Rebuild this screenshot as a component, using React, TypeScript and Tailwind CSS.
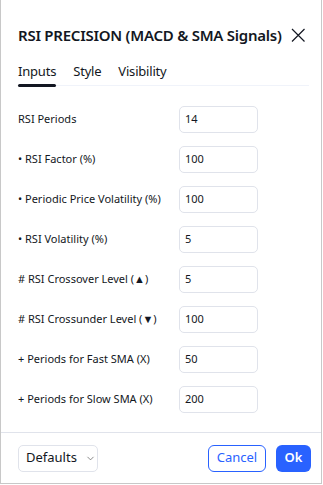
import { ChevronDown } from "lucide-react";

const rows = [
  { label: "RSI Periods", value: "14" },
  { label: "• RSI Factor (%)", value: "100" },
  { label: "• Periodic Price Volatility (%)", value: "100" },
  { label: "• RSI Volatility (%)", value: "5" },
  { label: "# RSI Crossover Level (▲)", value: "5" },
  { label: "# RSI Crossunder Level (▼)", value: "100" },
  { label: "+ Periods for Fast SMA (X)", value: "50" },
  { label: "+ Periods for Slow SMA (X)", value: "200" },
];

const tabs = ["Inputs", "Style", "Visibility"];

export default function App() {
  return (
    <div
      className="w-[322px] h-[484px] bg-white border border-[#c8c8c8] border-t-0 flex flex-col text-[#131722]"
      style={{ fontFamily: '"Noto Sans", "Open Sans", sans-serif' }}
    >
      {/* Header */}
      <div className="pl-[17px] pr-[15px] pt-[23px] flex items-center justify-between h-[47px]">
        <h1 className="text-[15px] font-semibold leading-[20px] whitespace-nowrap tracking-[-0.25px]">
          RSI PRECISION (MACD &amp; SMA Signals)
        </h1>
        <svg width="16" height="16" viewBox="0 0 16 16" className="shrink-0">
          <path d="M2 2L14.5 14.5M14.5 2L2 14.5" stroke="#131722" strokeWidth="1.2" />
        </svg>
      </div>

      {/* Tabs */}
      <div className="ml-[17px] mr-[12px] mt-[11px] h-[28px] flex items-stretch gap-[17px] border-b border-[#f0f3fa]">
        {tabs.map((t, i) => (
          <div key={t} className="relative flex items-center text-[13px] tracking-[-0.2px]">
            {t}
            {i === 0 && (
              <span className="absolute left-0 right-0 -bottom-[2px] h-[3px] rounded-full bg-[#131722]" />
            )}
          </div>
        ))}
      </div>

      {/* Inputs */}
      <div className="flex-1 pt-[13px] px-[17px]">
        {rows.map((r) => (
          <div key={r.label} className="h-[40px] flex items-center">
            <div className="w-[161px] text-[11px]">{r.label}</div>
            <div className="w-[79px] h-[27px] rounded-[5px] border border-[#e0e3eb] flex items-center px-[5px] text-[11px]">
              {r.value}
            </div>
          </div>
        ))}
      </div>

      {/* Footer */}
      <div className="h-[51px] border-t border-[#e0e3eb] px-[17px] flex items-center justify-between">
        <div className="w-[80px] h-[27px] rounded-[5px] border border-[#e0e3eb] flex items-center gap-[8px] pl-[7px] text-[13px]">
          Defaults
          <ChevronDown size={11} strokeWidth={1.5} className="text-[#555]" />
        </div>
        <div className="flex items-center gap-[10px] mr-[-7px]">
          <div className="w-[58px] h-[27px] rounded-[6px] border border-[#2962ff] text-[#2962ff] flex items-center justify-center text-[13px]">
            Cancel
          </div>
          <div className="w-[35px] h-[27px] rounded-[6px] bg-[#2962ff] text-white flex items-center justify-center text-[13px] font-semibold">
            Ok
          </div>
        </div>
      </div>
    </div>
  );
}
